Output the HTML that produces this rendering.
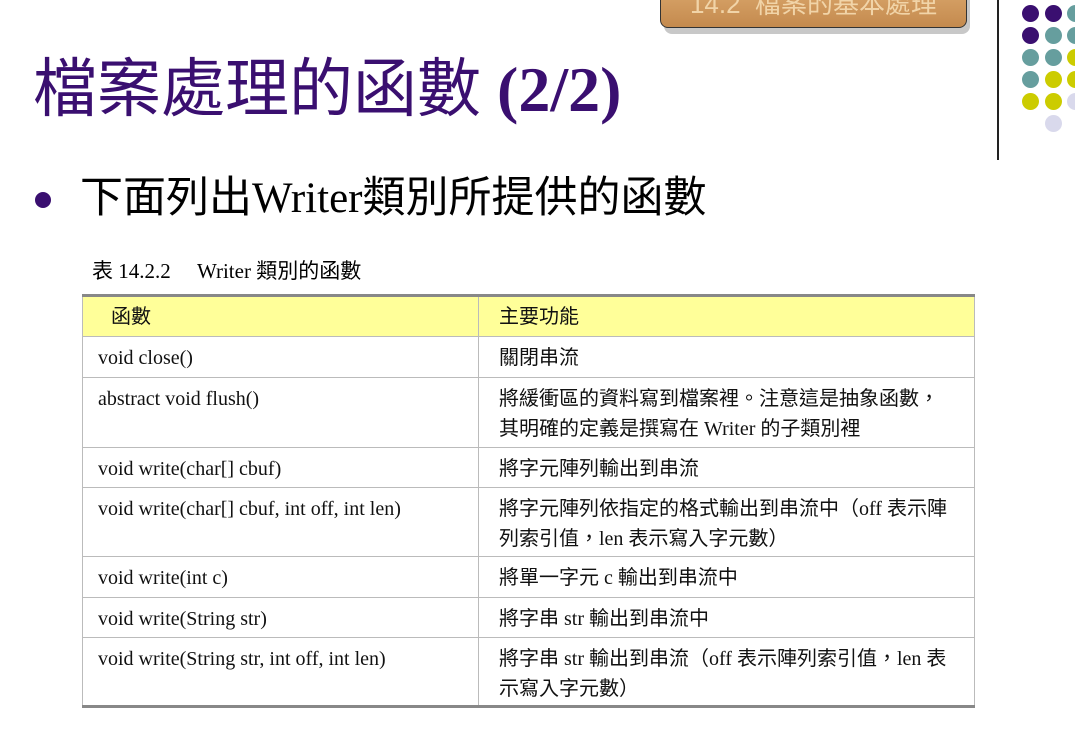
<!DOCTYPE html>
<html><head><meta charset="utf-8"><style>
body{margin:0;width:1075px;height:743px;background:#fff;position:relative;overflow:hidden;font-family:"Liberation Serif","Noto Serif CJK SC",serif}
.abs{position:absolute}
.dot{position:absolute;width:17px;height:17px;border-radius:50%}
.p{background:#3a0f70}.t{background:#669e9e}.y{background:#cccc00}.l{background:#d9d9ec}
table{position:absolute;left:82px;top:294px;width:893px;border-collapse:collapse;font-size:20px;color:#111}
td{border:1px solid #bbb;vertical-align:top;padding:6px 15px 0 15px;line-height:30px;font-family:"Liberation Serif","Noto Sans CJK TC",serif}
tr.h td{background:#ffff99;border-top:3px solid #888;height:34px;padding-top:5px}
tr:last-child td{border-bottom:3px solid #888}
td.c2{font-family:"Liberation Serif","Noto Sans CJK TC",sans-serif;padding-left:20px;padding-right:18px}
</style></head><body>
<div class="abs" style="left:664px;top:-10px;width:306px;height:44px;background:#c8c8c8;border-radius:8px"></div>
<div class="abs" style="left:660px;top:-12px;width:305px;height:38px;background:linear-gradient(#d9a56a,#c48a4e);border:1px solid #333;border-radius:8px;color:#f1d4a8;font-size:26px;line-height:30px;text-align:center;font-family:'Liberation Sans','Noto Sans CJK TC',sans-serif;overflow:hidden">14.2&nbsp; 檔案的基本處理</div>
<div class="abs" style="left:997px;top:0;width:2px;height:160px;background:#222"></div>
<div class="dot p" style="left:1022px;top:5px"></div><div class="dot p" style="left:1045px;top:5px"></div><div class="dot t" style="left:1067px;top:5px"></div>
<div class="dot p" style="left:1022px;top:27px"></div><div class="dot t" style="left:1045px;top:27px"></div><div class="dot t" style="left:1067px;top:27px"></div>
<div class="dot t" style="left:1022px;top:49px"></div><div class="dot t" style="left:1045px;top:49px"></div><div class="dot y" style="left:1067px;top:49px"></div>
<div class="dot t" style="left:1022px;top:71px"></div><div class="dot y" style="left:1045px;top:71px"></div><div class="dot y" style="left:1067px;top:71px"></div>
<div class="dot y" style="left:1022px;top:93px"></div><div class="dot y" style="left:1045px;top:93px"></div><div class="dot l" style="left:1067px;top:93px"></div>
<div class="dot l" style="left:1045px;top:115px"></div>
<div class="abs" style="left:33px;top:44px;font-size:64px;line-height:80px;color:#3a0f70;font-weight:bold;font-family:'Liberation Serif','Noto Sans CJK TC',serif;white-space:nowrap"><span style="font-weight:normal;font-family:'Noto Sans CJK TC',sans-serif">檔案處理的函數</span> (2/2)</div>
<div class="abs" style="left:35px;top:192px;width:16px;height:16px;border-radius:50%;background:#3a0f70"></div>
<div class="abs" style="left:80px;top:172px;font-size:43px;line-height:54px;color:#000;font-family:'Liberation Serif','Noto Sans CJK TC',serif;white-space:nowrap">下面列出Writer類別所提供的函數</div>
<div class="abs" style="left:92px;top:257px;font-size:21px;line-height:28px;font-family:'Liberation Serif','Noto Sans CJK TC',serif;white-space:nowrap">表 14.2.2&nbsp;&nbsp;&nbsp;&nbsp; Writer 類別的函數</div>
<table>
<colgroup><col style="width:396px"><col></colgroup>
<tr class="h"><td style="padding-left:28px">函數</td><td class="c2">主要功能</td></tr>
<tr><td style="height:34px">void close()</td><td class="c2">關閉串流</td></tr>
<tr><td style="height:63px">abstract void flush()</td><td class="c2">將緩衝區的資料寫到檔案裡。注意這是抽象函數，其明確的定義是撰寫在 Writer 的子類別裡</td></tr>
<tr><td style="height:33px">void write(char[] cbuf)</td><td class="c2">將字元陣列輸出到串流</td></tr>
<tr><td style="height:62px">void write(char[] cbuf, int off, int len)</td><td class="c2">將字元陣列依指定的格式輸出到串流中（off 表示陣列索引值，len 表示寫入字元數）</td></tr>
<tr><td style="height:34px">void write(int c)</td><td class="c2">將單一字元 c 輸出到串流中</td></tr>
<tr><td style="height:33px">void write(String str)</td><td class="c2">將字串 str 輸出到串流中</td></tr>
<tr><td style="height:61px">void write(String str, int off, int len)</td><td class="c2">將字串 str 輸出到串流（off 表示陣列索引值，len 表示寫入字元數）</td></tr>
</table>
</body></html>
